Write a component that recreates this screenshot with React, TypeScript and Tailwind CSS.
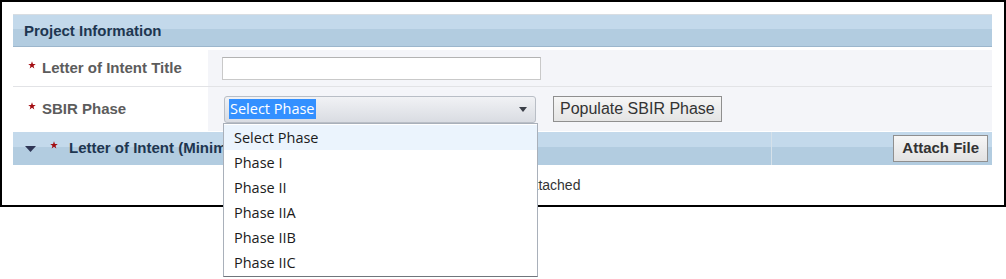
import { useState } from "react";

const phases = ["Select Phase", "Phase I", "Phase II", "Phase IIA", "Phase IIB", "Phase IIC"];

const Star = ({ className }: { className?: string }) => (
	<svg viewBox="0 0 10 10" className={className} aria-hidden="true">
		<polygon
			points="5,0.3 6.2,3.6 9.7,3.7 6.9,5.9 7.9,9.4 5,7.3 2.1,9.4 3.1,5.9 0.3,3.7 3.8,3.6"
			fill="#a30d12"
		/>
	</svg>
);

const Header = ({ children }: { children: React.ReactNode }) => (
	<div className="h-[33px] border-t border-[#d8dde2] border-b border-b-[#9cb6cc] bg-[linear-gradient(#c3d9eb_0,#c3d9eb_46%,#b2cce0_46%,#b2cce0_100%)] flex items-center">
		{children}
	</div>
);

const App = () => {
	const [selected] = useState(0);

	return (
		<div className="relative w-[1006px] h-[279px] bg-white font-['Liberation_Sans',Arial,sans-serif]">
			<div className="w-[1006px] h-[207px] border-2 border-black pt-[12px] pl-[11px] pr-[12px]">
				<Header>
					<span className="pl-[11px] pt-px text-[15px] font-bold text-[#1e3650]">Project Information</span>
				</Header>

				<div className="mt-[3px] flex h-[37px] border-b border-[#e2e3e6]">
					<div className="w-[195px] flex items-center gap-[6px] pl-[15px]">
						<Star className="w-[8px] h-[8px] -mt-[6px]" />
						<span className="text-[15px] font-bold text-[#5c5c5c]">Letter of Intent Title</span>
					</div>
					<div className="grow bg-[#f4f5f9] flex items-center pl-[14px]">
						<input className="w-[319px] h-[23px] bg-white border border-[#c9c9c9] border-t-[#b3b3b3] outline-none" />
					</div>
				</div>

				<div className="flex h-[44px]">
					<div className="w-[195px] flex items-center gap-[6px] pl-[15px]">
						<Star className="w-[8px] h-[8px] -mt-[6px]" />
						<span className="text-[15px] font-bold text-[#5c5c5c]">SBIR Phase</span>
					</div>
					<div className="grow bg-[#f4f5f9] flex items-center pl-[16px] gap-[17px]">
						<div className="w-[312px] h-[27px] rounded-[3px] border border-[#b9bec6] bg-[linear-gradient(#f1f2f5,#d9dce2)] flex items-center pl-[4px] pr-[8px] font-['Open_Sans','Noto_Sans',sans-serif]">
							<span className="bg-[#3390ff] text-white text-[14.5px] leading-[20px] px-px">{phases[selected]}</span>
							<svg viewBox="0 0 8 5" className="ml-auto w-[8px] h-[5px]" aria-hidden="true">
								<polygon points="0,0 8,0 4,5" fill="#3b3f48" />
							</svg>
						</div>
						<button className="h-[26px] px-[6px] border border-[#8f8f8f] bg-[linear-gradient(#f6f6f6,#e4e4e4)] text-[16px] text-[#333]">
							Populate SBIR Phase
						</button>
					</div>
				</div>

				<div className="mt-px h-[33px] flex bg-[linear-gradient(#c3d9eb_0,#c3d9eb_46%,#b2cce0_46%,#b2cce0_100%)]">
					<div className="w-[759px] flex items-center border-r border-[#d5e1ea]">
						<svg viewBox="0 0 11 6" className="ml-[12px] w-[11px] h-[6px]" aria-hidden="true">
							<polygon points="0,0 11,0 5.5,6" fill="#2f3656" />
						</svg>
						<Star className="ml-[14px] w-[8px] h-[8px] -mt-[7px]" />
						<span className="ml-[11px] text-[15px] font-bold text-[#1e3650]">Letter of Intent (Minimum 1 Required)</span>
					</div>
					<div className="grow flex items-center justify-end pr-[4px]">
						<button className="h-[27px] px-[8px] border border-[#8f8f8f] bg-[linear-gradient(#f6f6f6,#e2e2e2)] text-[15px] font-bold text-[#333]">
							Attach File
						</button>
					</div>
				</div>

				<div className="h-[40px] flex items-center justify-center pl-[8px] text-[14px] text-[#333]">
					No documents attached
				</div>
			</div>

			<ul className="absolute left-[223px] top-[123px] w-[315px] bg-white border border-[#a9b0ba] border-b-[#70757c] py-px font-['Open_Sans','Noto_Sans',sans-serif] text-[14.5px] text-[#1b1b1b]">
				{phases.map((phase, i) => (
					<li key={phase} className={`h-[25px] flex items-center pl-[10px] ${i === selected ? "bg-[#ebf4fd]" : ""}`}>
						{phase}
					</li>
				))}
			</ul>
		</div>
	);
};

export default App;
